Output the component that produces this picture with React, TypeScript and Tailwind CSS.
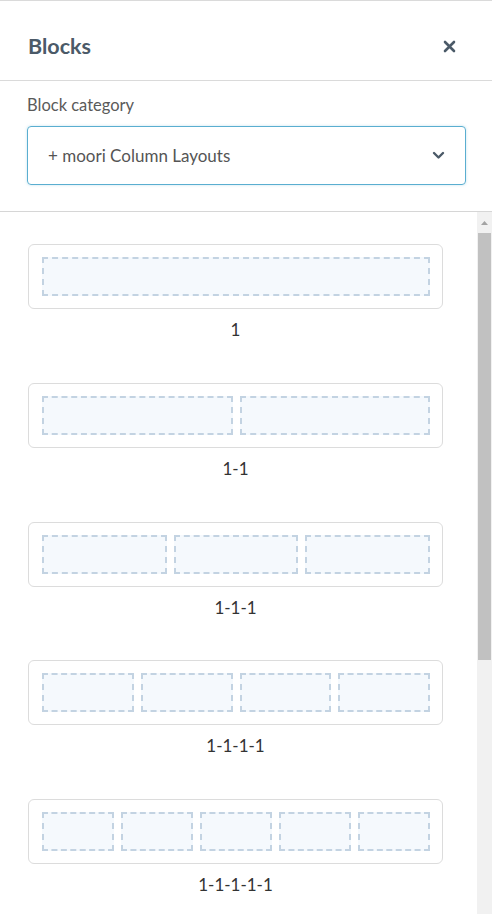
import React from "react";

const layouts = [
  { name: "1", cols: 1 },
  { name: "1-1", cols: 2 },
  { name: "1-1-1", cols: 3 },
  { name: "1-1-1-1", cols: 4 },
  { name: "1-1-1-1-1", cols: 5 },
];

function LayoutCard({ name, cols }: { name: string; cols: number }) {
  return (
    <div className="flex flex-col items-center">
      <div className="w-[415px] h-[65px] rounded-[6px] border border-[#dcdcdc] bg-white pl-[13px] pr-[12px] py-[12px] flex gap-[7px]">
        {Array.from({ length: cols }).map((_, i) => (
          <div
            key={i}
            className="flex-1 h-full border-2 border-dashed border-[#c3d3e2] bg-[#f5f9fd]"
          />
        ))}
      </div>
      <div className="mt-[10px] h-[22px] leading-[22px] text-[17px] text-[#333]">{name}</div>
    </div>
  );
}

export default function App() {
  return (
    <div
      className="w-[492px] h-[914px] bg-white flex flex-col overflow-hidden"
      style={{ fontFamily: "Lato, 'Open Sans', sans-serif" }}
    >
      {/* header */}
      <div className="h-[81px] border-t border-b border-[#dadada] flex items-center justify-between pl-7 pr-[36px] pt-[11px] shrink-0">
        <h1 className="text-[21.5px] font-bold text-[#4b5a68]">Blocks</h1>
        <svg width="13" height="13" viewBox="0 0 13 13">
          <path d="M2 2 L11 11 M11 2 L2 11" stroke="#4b5a68" strokeWidth="2.6" strokeLinecap="round" />
        </svg>
      </div>

      {/* category */}
      <div className="pl-[27px] pr-[26px] pt-[13px] pb-[26px] border-b border-[#d6d6d6] shrink-0">
        <div className="text-[16.5px] text-[#5a5a5a] leading-[22px] mb-[10px]">Block category</div>
        <div className="h-[59px] rounded-[4px] border border-[#5aaed0] shadow-[0_0_3px_rgba(90,174,208,0.35)] flex items-center justify-between pl-[20px] pr-[20px]">
          <span className="text-[17px] text-[#555]">+ moori Column Layouts</span>
          <svg width="13" height="9" viewBox="0 0 13 9">
            <path d="M2 2 L6.5 6.5 L11 2" stroke="#4b5a68" strokeWidth="2.4" fill="none" strokeLinecap="round" strokeLinejoin="round" />
          </svg>
        </div>
      </div>

      {/* list + scrollbar */}
      <div className="flex-1 flex min-h-0">
        <div className="flex-1 overflow-hidden pl-7 pt-[32px]">
          <div className="flex flex-col gap-[41.75px] w-[415px]">
            {layouts.map((l) => (
              <LayoutCard key={l.name} name={l.name} cols={l.cols} />
            ))}
          </div>
        </div>
        <div className="w-[15px] bg-[#f1f1f1] flex flex-col">
          <div className="h-[21px] flex items-center justify-center">
            <svg width="7" height="4" viewBox="0 0 7 4">
              <path d="M0 4 L3.5 0 L7 4 Z" fill="#a3a3a3" />
            </svg>
          </div>
          <div className="h-[427px] mx-[1px] bg-[#c1c1c1]" />
        </div>
      </div>
    </div>
  );
}
